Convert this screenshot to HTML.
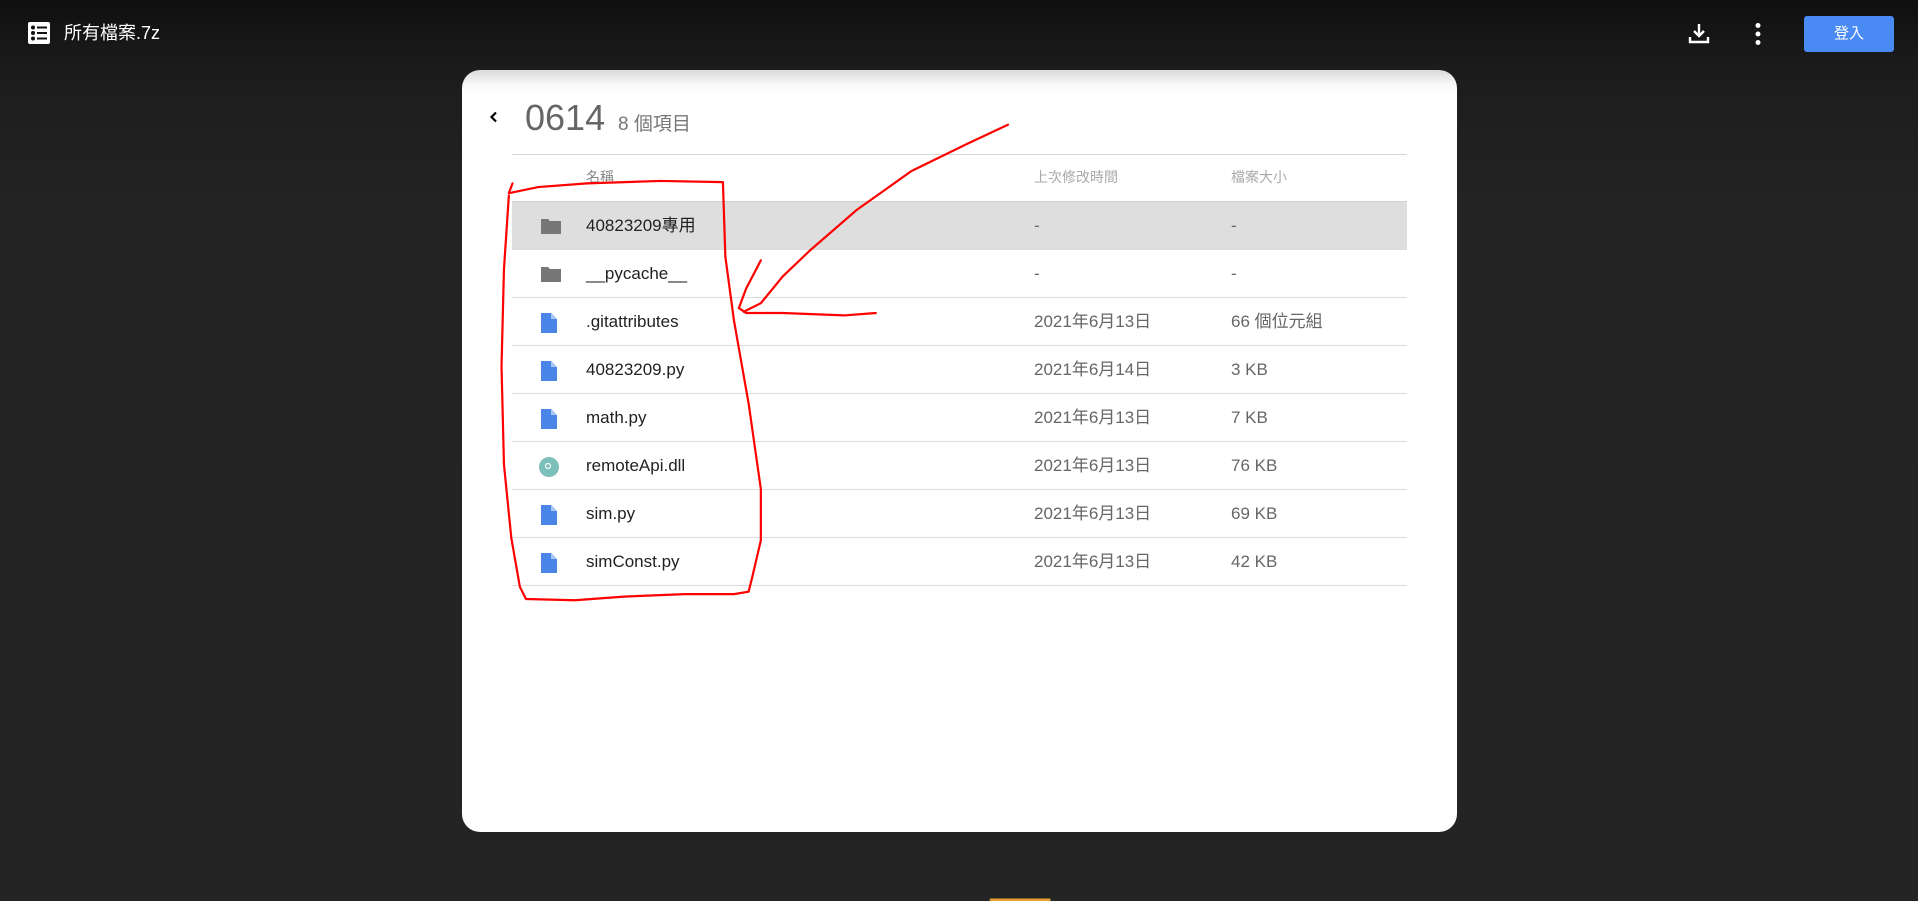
<!DOCTYPE html>
<html><head><meta charset="utf-8"><style>
*{margin:0;padding:0;box-sizing:border-box}
body{width:1918px;height:901px;overflow:hidden;background:linear-gradient(#0f0f0f 0px,#1c1c1c 70px,#232323 200px,#242424 901px);font-family:"Liberation Sans","Noto Sans CJK TC",sans-serif;position:relative}
.t{position:absolute;line-height:1.2}
.card{position:absolute;left:462px;top:70px;width:995px;height:762px;border-radius:18px;background:linear-gradient(#dadada 0px,#f8f8f8 14px,#fff 24px)}
.row{position:absolute;left:512px;width:895px;height:48px;border-bottom:1px solid #dcdcdc;font-size:17px;color:#222}
.row span{position:absolute;top:14px;line-height:20px;height:20px;white-space:nowrap}
.n{left:74px}.d{left:522px;color:#666}.s{left:719px;color:#666}
.ic{position:absolute;left:29px;top:15px}
</style></head><body>
<svg class="t" style="left:28px;top:22px" width="22" height="22" viewBox="0 0 22 22"><rect x="0" y="0" width="22" height="22" rx="2" fill="#fff"/><circle cx="5" cy="5.5" r="2" fill="#111"/><circle cx="5" cy="11" r="2" fill="#111"/><circle cx="5" cy="16.5" r="2" fill="#111"/><rect x="9" y="4.5" width="10" height="2" fill="#111"/><rect x="9" y="10" width="10" height="2" fill="#111"/><rect x="9" y="15.5" width="10" height="2" fill="#111"/></svg>
<div class="t" style="left:64px;top:22px;color:#fff;font-size:18px;line-height:22px">所有檔案.7z</div>
<svg class="t" style="left:1688px;top:22px" width="22" height="22" viewBox="0 0 22 22" fill="none" stroke="#fff" stroke-width="2.4"><path d="M11 2v12M6 9l5 5 5-5M2 15v5h18v-5"/></svg>
<svg class="t" style="left:1754px;top:22px" width="8" height="24"><circle cx="4" cy="3.5" r="2.5" fill="#fff"/><circle cx="4" cy="12" r="2.5" fill="#fff"/><circle cx="4" cy="20.5" r="2.5" fill="#fff"/></svg>
<div class="t" style="left:1804px;top:16px;width:90px;height:36px;background:#4a8af4;border-radius:3px;color:#fff;font-size:15px;text-align:center;line-height:36px">登入</div>
<div class="card"></div>
<svg class="t" style="left:489px;top:111px" width="10" height="12"><path d="M7 1.5L2.5 6 7 10.5" stroke="#000" stroke-width="2.2" fill="none"/></svg>
<div class="t" style="left:525px;top:98px;font-size:36px;color:#666;line-height:40px">0614</div>
<div class="t" style="left:618px;top:114px;font-size:19px;color:#777;line-height:22px">8 個項目</div>
<div class="t" style="left:512px;top:154px;width:895px;height:1px;background:#d6d6d6"></div>
<div class="t" style="left:586px;top:169px;font-size:14px;color:#888;line-height:17px">名稱</div>
<div class="t" style="left:1034px;top:169px;font-size:14px;color:#aaa;line-height:17px">上次修改時間</div>
<div class="t" style="left:1231px;top:169px;font-size:14px;color:#aaa;line-height:17px">檔案大小</div>
<div class="t" style="left:512px;top:201px;width:895px;height:1px;background:#d0d0d0"></div>
<div class="row" style="top:202px;background:#dedede"><svg class="ic" width="20" height="18"><path d="M0 2h7l2 2h11v13H0z" fill="#777"/></svg><span class="n">40823209專用</span><span class="d">-</span><span class="s">-</span></div>
<div class="row" style="top:250px"><svg class="ic" width="20" height="18"><path d="M0 2h7l2 2h11v13H0z" fill="#777"/></svg><span class="n">__pycache__</span><span class="d">-</span><span class="s">-</span></div>
<div class="row" style="top:298px"><svg class="ic" width="16" height="20"><path d="M0 0h10l6 6v14H0z" fill="#4a86e8"/><path d="M10 0v6h6z" fill="#a8c4f4"/></svg><span class="n">.gitattributes</span><span class="d">2021年6月13日</span><span class="s">66 個位元組</span></div>
<div class="row" style="top:346px"><svg class="ic" width="16" height="20"><path d="M0 0h10l6 6v14H0z" fill="#4a86e8"/><path d="M10 0v6h6z" fill="#a8c4f4"/></svg><span class="n">40823209.py</span><span class="d">2021年6月14日</span><span class="s">3 KB</span></div>
<div class="row" style="top:394px"><svg class="ic" width="16" height="20"><path d="M0 0h10l6 6v14H0z" fill="#4a86e8"/><path d="M10 0v6h6z" fill="#a8c4f4"/></svg><span class="n">math.py</span><span class="d">2021年6月13日</span><span class="s">7 KB</span></div>
<div class="row" style="top:442px"><svg class="ic" width="20" height="20" style="left:27px"><circle cx="10" cy="10" r="10" fill="#7cbfbb"/><circle cx="9" cy="9" r="2.5" stroke="#fff" stroke-width="1.2" fill="none"/></svg><span class="n">remoteApi.dll</span><span class="d">2021年6月13日</span><span class="s">76 KB</span></div>
<div class="row" style="top:490px"><svg class="ic" width="16" height="20"><path d="M0 0h10l6 6v14H0z" fill="#4a86e8"/><path d="M10 0v6h6z" fill="#a8c4f4"/></svg><span class="n">sim.py</span><span class="d">2021年6月13日</span><span class="s">69 KB</span></div>
<div class="row" style="top:538px"><svg class="ic" width="16" height="20"><path d="M0 0h10l6 6v14H0z" fill="#4a86e8"/><path d="M10 0v6h6z" fill="#a8c4f4"/></svg><span class="n">simConst.py</span><span class="d">2021年6月13日</span><span class="s">42 KB</span></div>
<svg class="t" style="left:0;top:0" width="1918" height="901" viewBox="0 0 1568 737" preserveAspectRatio="none" fill="none" stroke="#f00" stroke-width="1.8" stroke-linejoin="round" stroke-linecap="round">
<path d="M419 150 L416 158 L440 153 L480 150 L540 148 L591 149 L593 210 L600 262 L612 330 L622 400 L622 442 L615 472 L612 484 L600 486 L560 486 L510 488 L470 491 L430 490 L425 480 L418 440 L412 380 L410 300 L412 220 L416 160"/>
<path d="M824 102 L790 118 L745 140 L700 172 L662 205 L640 226 L622 248 L608 255"/>
<path d="M622 213 L610 236 L604 252 L610 256 L640 256 L690 258 L716 256"/>
<path d="M810 736 L858 736" stroke="#e8a030" stroke-width="2"/>
</svg>
</body></html>
